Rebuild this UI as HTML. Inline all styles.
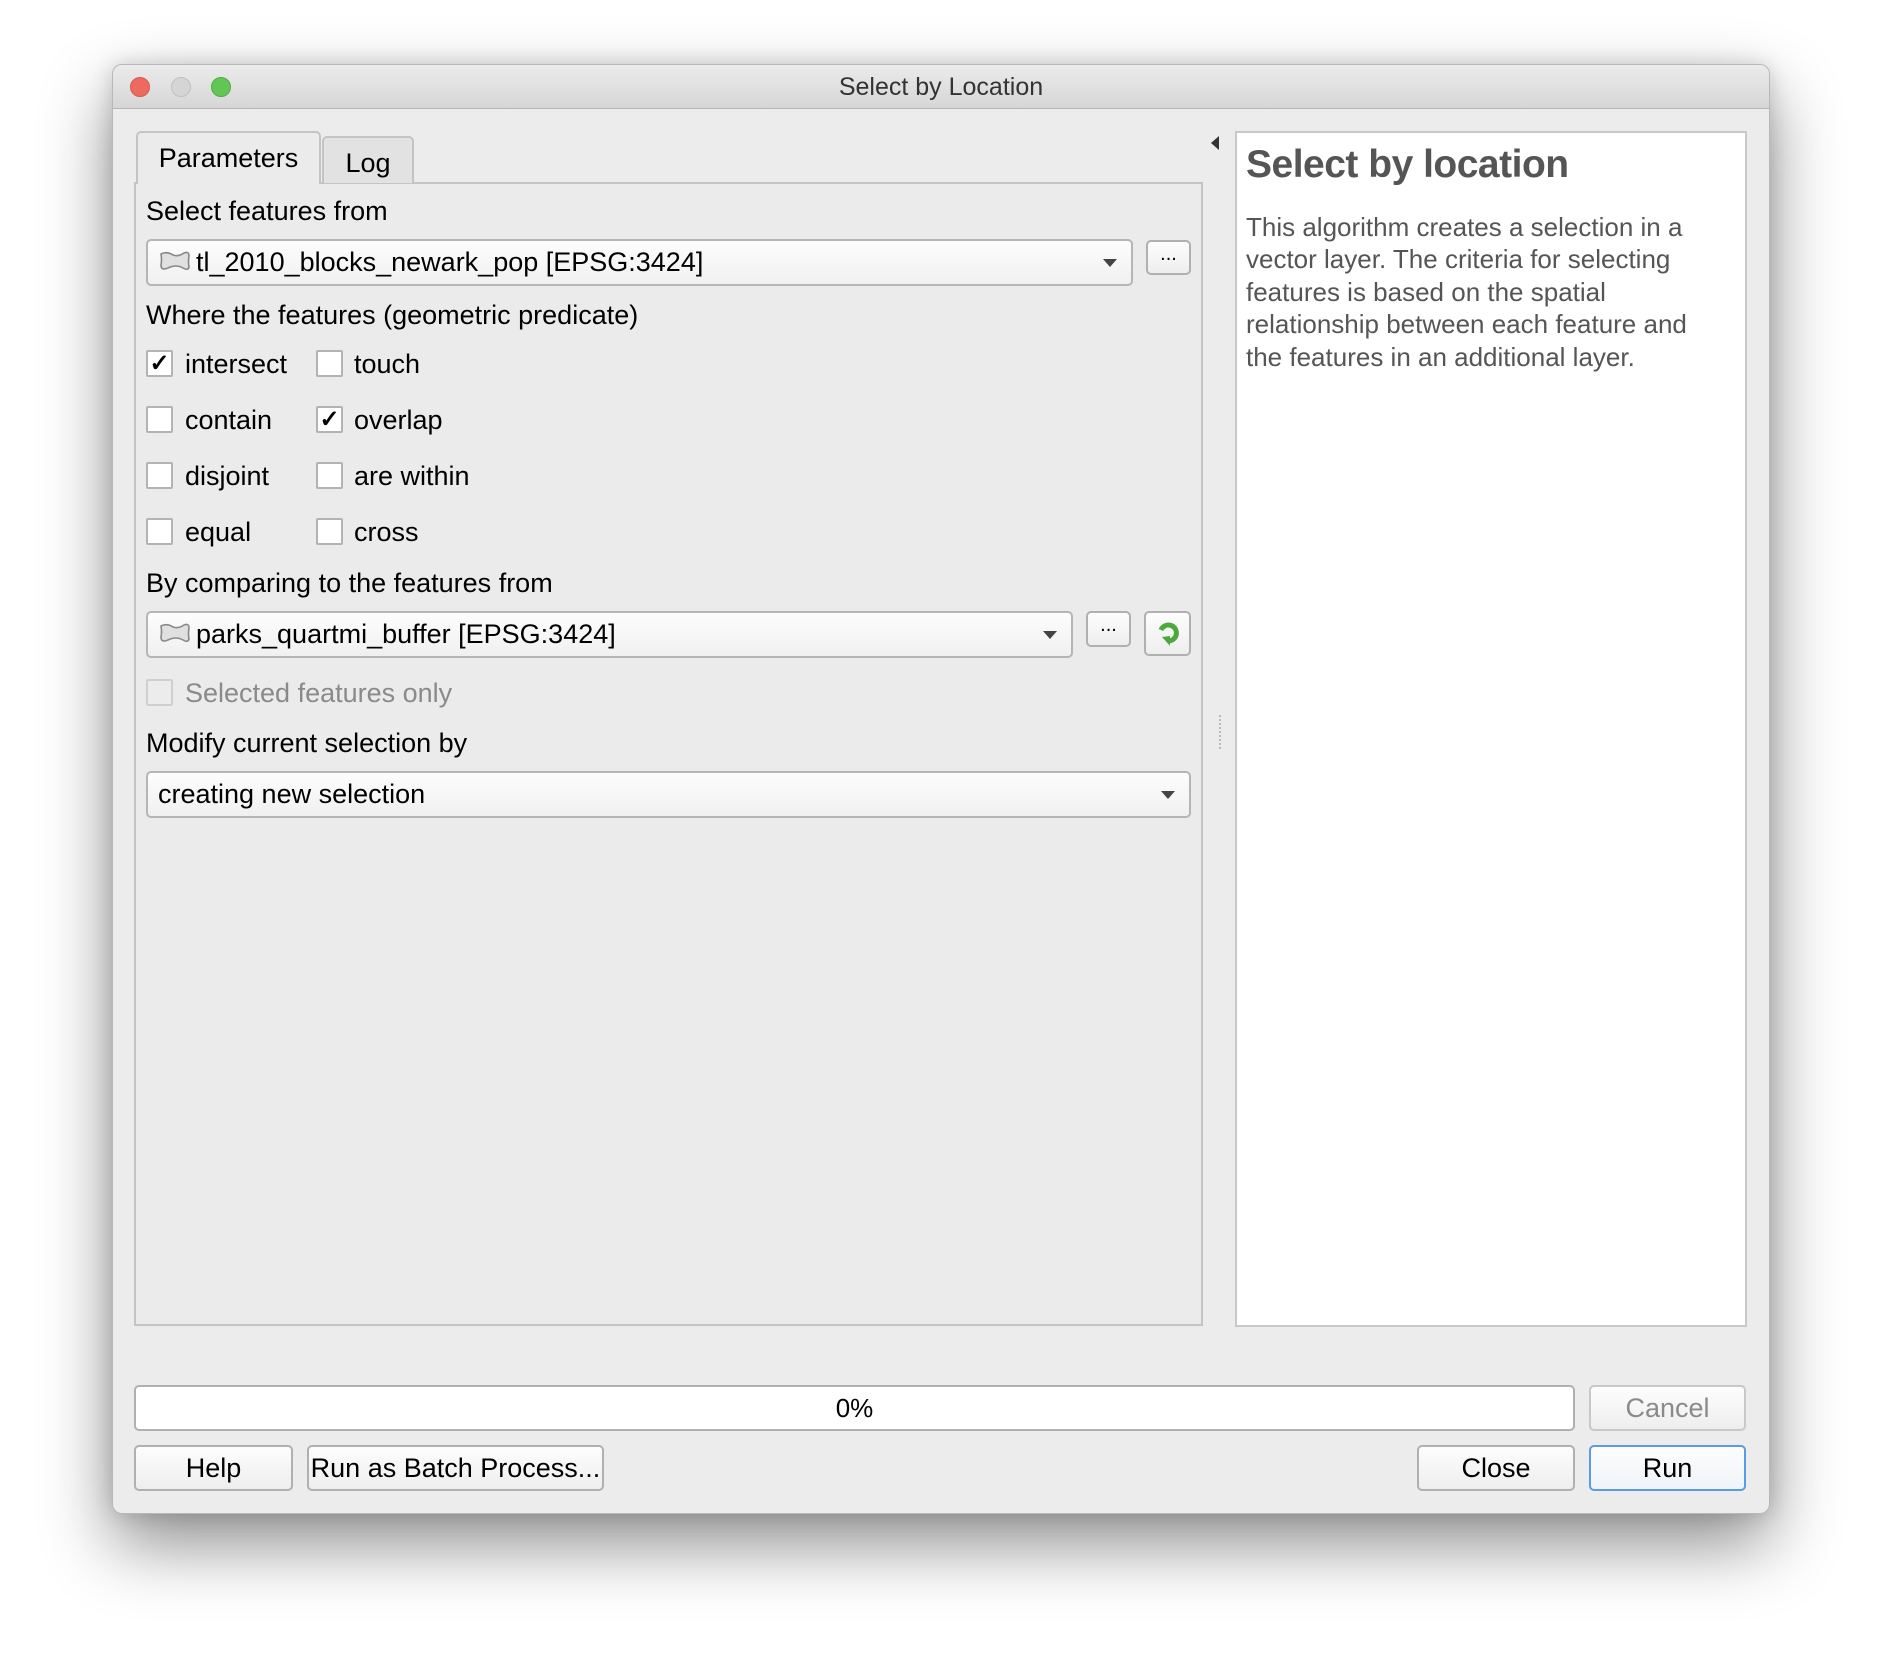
<!DOCTYPE html>
<html><head><meta charset="utf-8"><style>
*{box-sizing:border-box;margin:0;padding:0}
body{width:1882px;height:1674px;background:#fff;position:relative;overflow:hidden;font-family:"Liberation Sans",sans-serif;color:#000}
.a{position:absolute}
.win{left:112px;top:64px;width:1658px;height:1450px;background:#ececec;border-radius:10px;border:1px solid #b8b8b8;box-shadow:0 30px 70px rgba(0,0,0,.45),0 0 20px rgba(0,0,0,.15);overflow:hidden}
.tb{left:0;top:0;width:100%;height:44px;background:linear-gradient(#ebebeb,#d6d6d6);border-bottom:1px solid #b5b5b5;text-align:center;font-size:25px;line-height:44px;color:#333}
.dot{width:20px;height:20px;border-radius:50%;top:12px}
.lbl{font-size:27px;line-height:30px;white-space:nowrap}
.combo{background:linear-gradient(#fdfdfd,#f0f0f0);border:2px solid #b5b5b5;border-radius:5px;font-size:27px;line-height:42px;padding-left:48px;white-space:nowrap}
.combo .arr{position:absolute;right:14px;top:18px;width:0;height:0;border-left:7px solid transparent;border-right:7px solid transparent;border-top:8px solid #444}
.btn{background:linear-gradient(#fdfdfd,#eeeeee);border:2px solid #b0b0b0;border-radius:5px;font-size:27px;text-align:center}
.cb{width:27px;height:27px;background:#fff;border:2px solid #b3b3b3;border-radius:2px;font-size:24px;line-height:24px;text-align:center;font-weight:bold}
</style></head><body>
<div class="a win">
 <div class="a tb">Select by Location</div>
 <div class="a dot" style="left:17px;background:#ee6a5f;border:1px solid #d55a50"></div>
 <div class="a dot" style="left:58px;background:#d5d5d5;border:1px solid #c0c0c0"></div>
 <div class="a dot" style="left:98px;background:#62c655;border:1px solid #52a948"></div>
</div>
<div class="a" style="left:134px;top:182px;width:1069px;height:1144px;border:2px solid #c4c4c4;background:#ebebeb"></div>
<div class="a" style="left:136px;top:131px;width:185px;height:53px;background:#ebebeb;border:2px solid #c4c4c4;border-bottom:none;border-radius:5px 5px 0 0;font-size:27px;text-align:center;line-height:50px">Parameters</div>
<div class="a" style="left:322px;top:136px;width:92px;height:47px;background:#e2e2e2;border:2px solid #c4c4c4;border-bottom:none;border-radius:5px 5px 0 0;font-size:27px;text-align:center;line-height:50px">Log</div>
<div class="a lbl" style="left:146px;top:196px">Select features from</div>
<div class="a combo" style="left:146px;top:239px;width:987px;height:47px"><svg class="a" style="left:10px;top:9px" width="34" height="22" viewBox="0 0 34 22"><path d="M3 4 Q9 1 15 5 Q20 7 26 3 Q31 1 31 6 Q30 12 31 17 Q30 21 25 18 Q18 14 10 18 Q3 21 3 15 Q4 10 3 4Z" fill="#e0e0e0" stroke="#888" stroke-width="1.6"/></svg>tl_2010_blocks_newark_pop [EPSG:3424]<div class="arr"></div></div>
<div class="a btn" style="left:1146px;top:240px;width:45px;height:35px;line-height:24px;font-size:20px">...</div>
<div class="a lbl" style="left:146px;top:300px">Where the features (geometric predicate)</div>
<div class="a cb" style="left:146px;top:350px">✓</div><div class="a lbl" style="left:185px;top:349px">intersect</div>
<div class="a cb" style="left:316px;top:350px"></div><div class="a lbl" style="left:354px;top:349px">touch</div>
<div class="a cb" style="left:146px;top:406px"></div><div class="a lbl" style="left:185px;top:405px">contain</div>
<div class="a cb" style="left:316px;top:406px">✓</div><div class="a lbl" style="left:354px;top:405px">overlap</div>
<div class="a cb" style="left:146px;top:462px"></div><div class="a lbl" style="left:185px;top:461px">disjoint</div>
<div class="a cb" style="left:316px;top:462px"></div><div class="a lbl" style="left:354px;top:461px">are within</div>
<div class="a cb" style="left:146px;top:518px"></div><div class="a lbl" style="left:185px;top:517px">equal</div>
<div class="a cb" style="left:316px;top:518px"></div><div class="a lbl" style="left:354px;top:517px">cross</div>
<div class="a lbl" style="left:146px;top:568px">By comparing to the features from</div>
<div class="a combo" style="left:146px;top:611px;width:927px;height:47px"><svg class="a" style="left:10px;top:9px" width="34" height="22" viewBox="0 0 34 22"><path d="M3 4 Q9 1 15 5 Q20 7 26 3 Q31 1 31 6 Q30 12 31 17 Q30 21 25 18 Q18 14 10 18 Q3 21 3 15 Q4 10 3 4Z" fill="#e0e0e0" stroke="#888" stroke-width="1.6"/></svg>parks_quartmi_buffer [EPSG:3424]<div class="arr"></div></div>
<div class="a btn" style="left:1086px;top:611px;width:45px;height:36px;line-height:24px;font-size:20px">...</div>
<div class="a btn" style="left:1144px;top:611px;width:47px;height:45px"><svg class="a" style="left:10px;top:8px" width="24" height="26" viewBox="0 0 24 26"><path d="M5 9 A8 8 0 1 1 12 20" fill="none" stroke="#4caa3c" stroke-width="5"/><path d="M6 16 L14 25 L14 15Z" fill="#4caa3c"/></svg></div>
<div class="a cb" style="left:146px;top:679px;background:#ececec;border-color:#cfcfcf"></div><div class="a lbl" style="left:185px;top:678px;color:#8a8a8a">Selected features only</div>
<div class="a lbl" style="left:146px;top:728px">Modify current selection by</div>
<div class="a combo" style="left:146px;top:771px;width:1045px;height:47px;padding-left:10px">creating new selection<div class="arr"></div></div>
<div class="a" style="left:1211px;top:136px;width:0;height:0;border-top:7px solid transparent;border-bottom:7px solid transparent;border-right:8px solid #333"></div>
<div class="a" style="left:1219px;top:715px;width:2px;height:34px;border-left:2px dotted #bbb"></div>
<div class="a" style="left:1235px;top:131px;width:512px;height:1196px;background:#fff;border:2px solid #c8c8c8"></div>
<div class="a" style="left:1246px;top:143px;font-size:39px;font-weight:bold;color:#555;letter-spacing:-0.5px">Select by location</div>
<div class="a" style="left:1246px;top:211px;width:470px;font-size:26px;line-height:32.4px;color:#555">This algorithm creates a selection in a vector layer. The criteria for selecting features is based on the spatial relationship between each feature and the features in an additional layer.</div>
<div class="a" style="left:134px;top:1385px;width:1441px;height:46px;background:#fff;border:2px solid #b0b0b0;border-radius:5px;text-align:center;font-size:26px;line-height:42px">0%</div>
<div class="a btn" style="left:1589px;top:1385px;width:157px;height:46px;line-height:42px;color:#8a8a8a;border-color:#c8c8c8">Cancel</div>
<div class="a btn" style="left:134px;top:1445px;width:159px;height:46px;line-height:42px">Help</div>
<div class="a btn" style="left:307px;top:1445px;width:297px;height:46px;line-height:42px">Run as Batch Process...</div>
<div class="a btn" style="left:1417px;top:1445px;width:158px;height:46px;line-height:42px">Close</div>
<div class="a btn" style="left:1589px;top:1445px;width:157px;height:46px;line-height:42px;border-color:#5a9be6;background:linear-gradient(#fdfdfd,#f0f3f8)">Run</div>
</body></html>
